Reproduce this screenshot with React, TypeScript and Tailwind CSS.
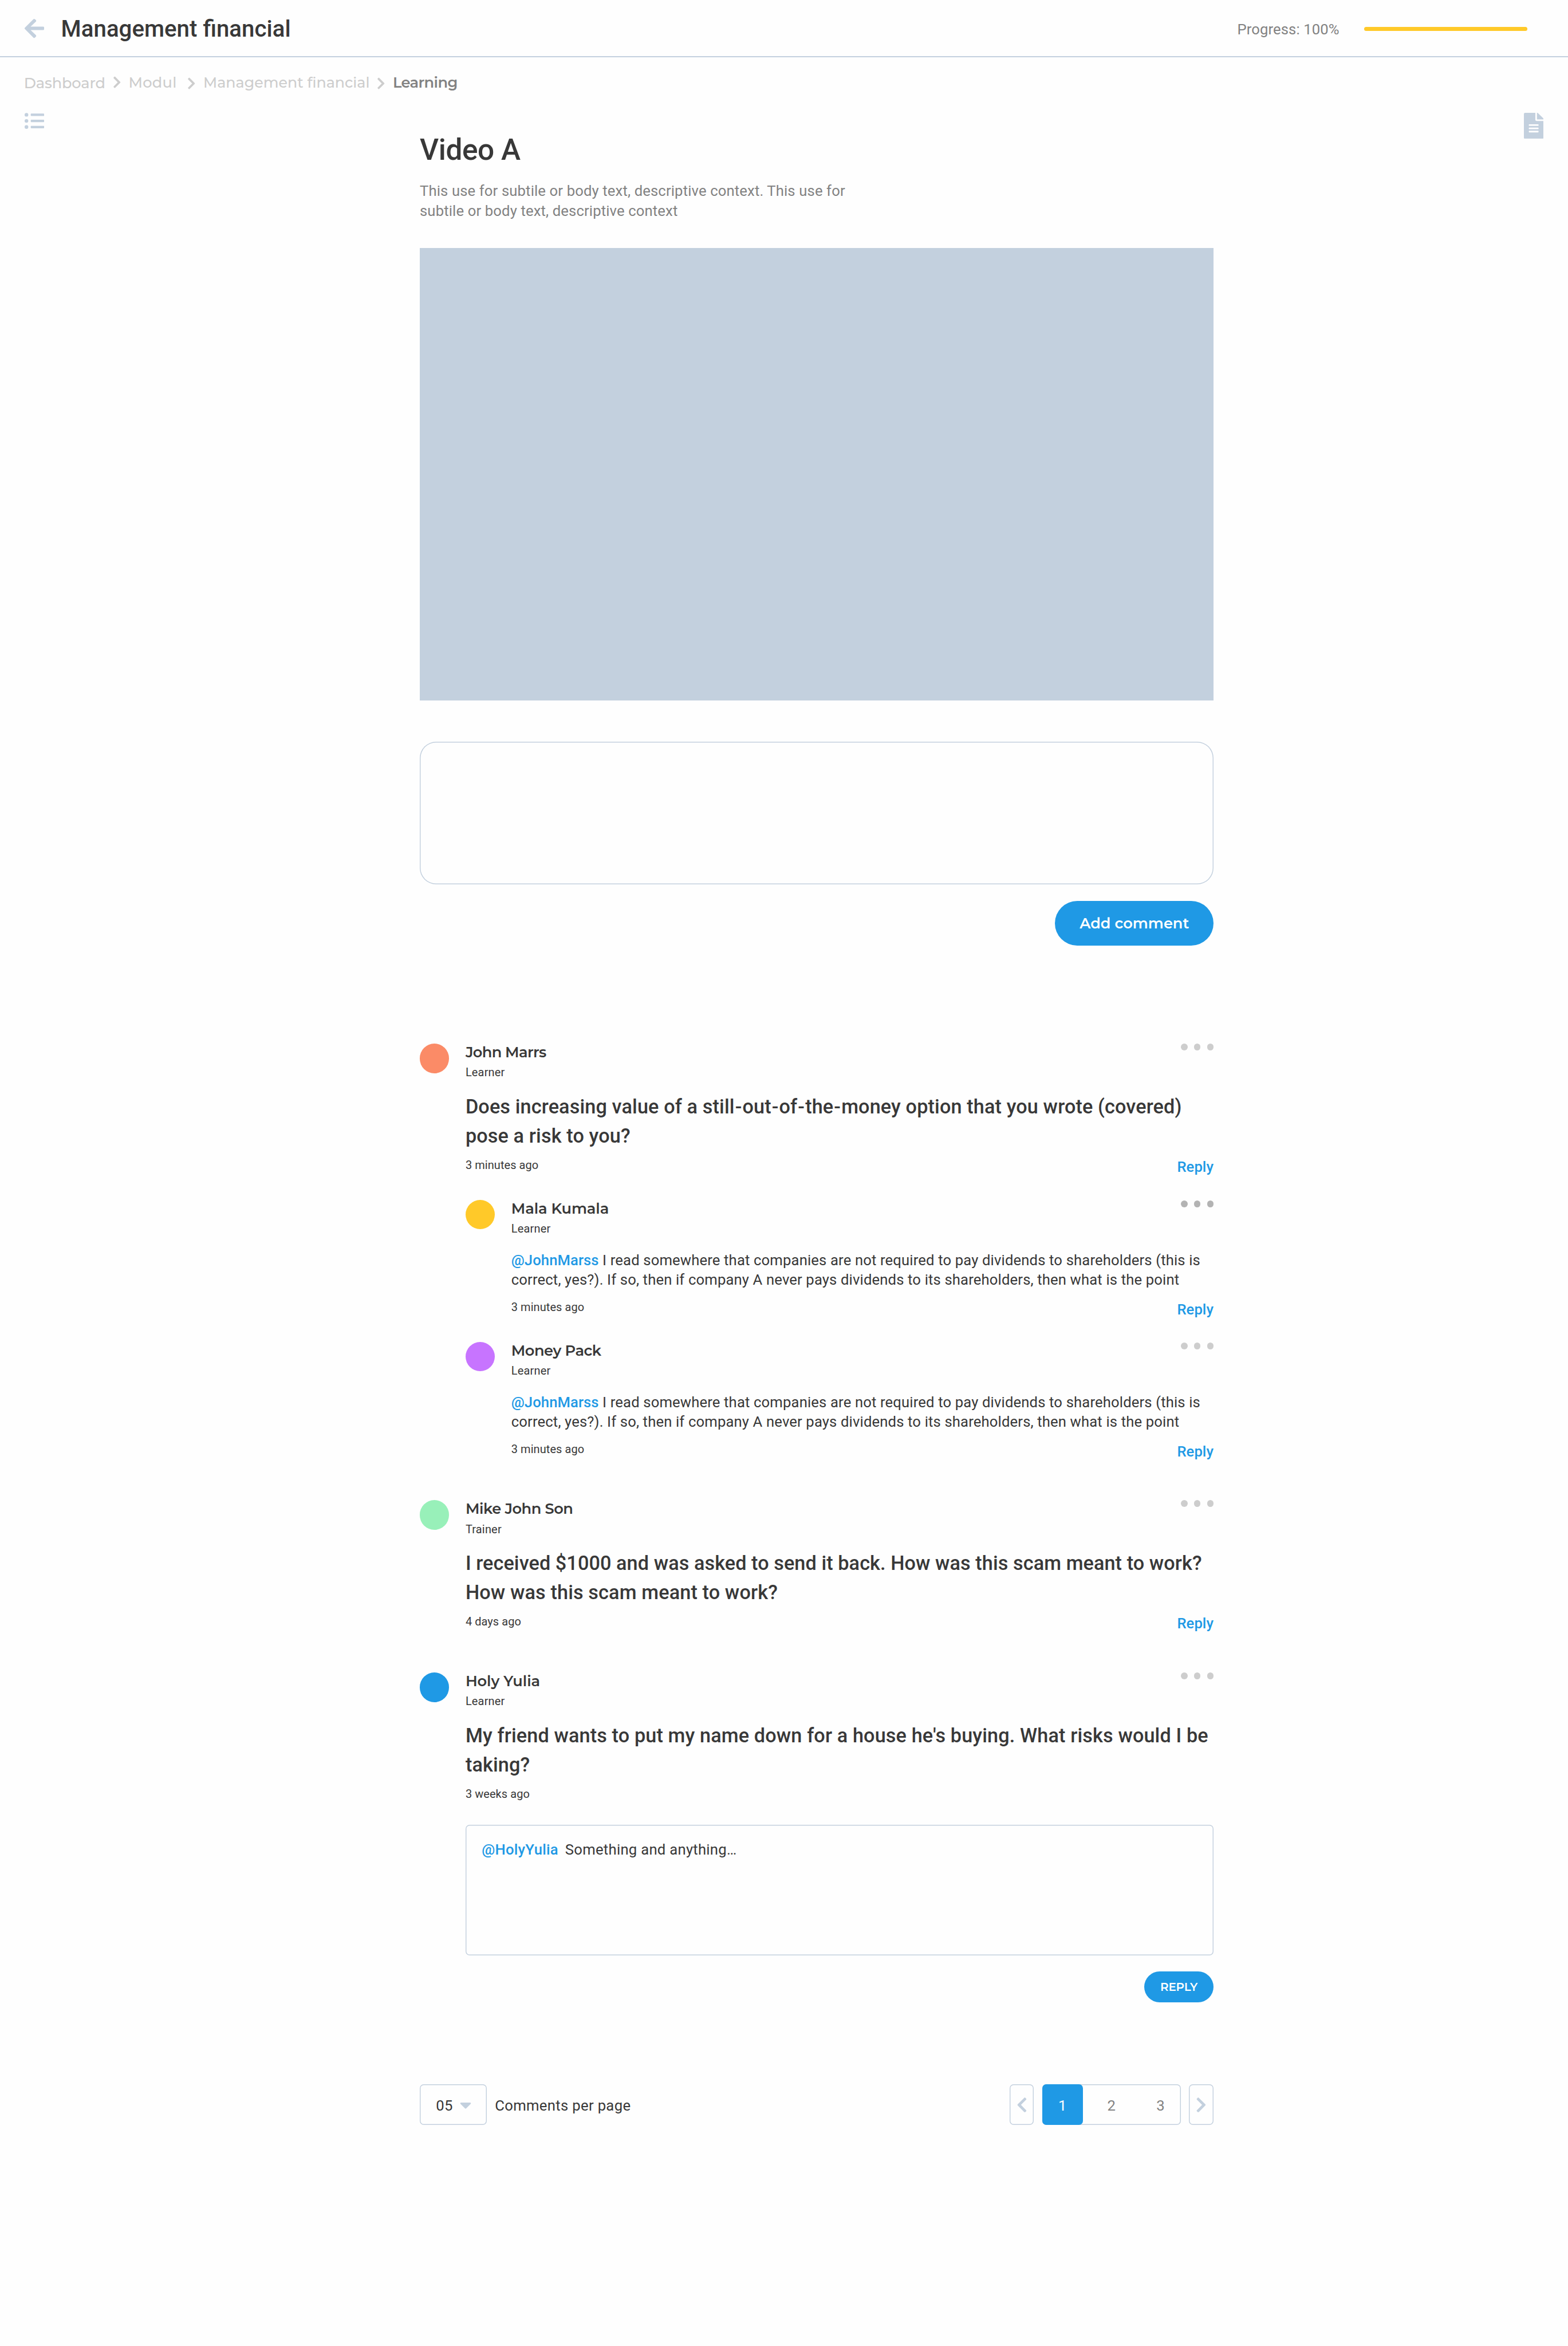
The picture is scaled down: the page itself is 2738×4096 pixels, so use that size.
import React from "react";
import type { ReactNode } from "react";
import {
  FaArrowLeft,
  FaCaretDown,
  FaChevronLeft,
  FaChevronRight,
  FaFileAlt,
  FaListUl,
} from "react-icons/fa";

function Header() {
  return (
    <header className="flex h-[100px] items-center border-b-2 border-[#c3d0de] pt-[3px] pl-[42.8px] pr-[71.3px]">
      <FaArrowLeft className="-mt-[2px] h-[39.1px] w-[34.2px] text-[#c3d0de]" />
      <h1 className="mt-[1px] ml-[29.6px] text-[40.25px] leading-[48px] font-medium text-[#383838]">
        Management financial
      </h1>
      <div className="ml-auto flex items-center gap-[42.9px]">
        <span className="mt-[0.6px] text-[25.67px] leading-[32px] tracking-[0.09px] text-[#828282]">
          Progress: 100%
        </span>
        <div className="h-[7px] w-[285.2px] rounded-full bg-[#ffc929]" />
      </div>
    </header>
  );
}

function Breadcrumb() {
  return (
    <nav className="flex h-[60px] items-start pt-[27.6px] pl-[41.8px] font-[Montserrat,Inter,sans-serif] text-[25.67px] leading-[32px] font-medium text-[#cdcdcd]">
      <span className="mt-[1.4px] tracking-[-0.18px]">Dashboard</span>
      <FaChevronRight className="mt-[4.7px] ml-[13.2px] h-[23.4px] w-[14.6px]" />
      <span className="ml-[13px] tracking-[0.25px]">Modul</span>
      <FaChevronRight className="mt-[6.1px] ml-[18.4px] h-[23.4px] w-[14.6px]" />
      <span className="ml-[13.4px] text-[25.32px]">Management financial</span>
      <FaChevronRight className="mt-[6.1px] ml-[12.3px] h-[23.4px] w-[14.6px]" />
      <span className="ml-[13.5px] font-semibold tracking-[-0.6px] text-[#828282]">
        Learning
      </span>
    </nav>
  );
}

function Dots({ className }: { className: string }) {
  return (
    <div className={`ml-auto flex gap-[11.4px] self-start ${className}`}>
      <i className="size-[11.4px] rounded-full bg-current" />
      <i className="size-[11.4px] rounded-full bg-current" />
      <i className="size-[11.4px] rounded-full bg-current" />
    </div>
  );
}

type CommentProps = {
  name: string;
  nameClass: string;
  role: string;
  avatar: string;
  time: string;
  dots: string;
  className: string;
  reply?: boolean;
  nested?: boolean;
  children: ReactNode;
};

function Comment({
  name,
  nameClass,
  role,
  avatar,
  time,
  dots,
  className,
  reply = true,
  nested = false,
  children,
}: CommentProps) {
  return (
    <article className={`flex gap-[28.5px] text-[#383838] ${className}`}>
      <div className={`size-[51.4px] shrink-0 rounded-full ${avatar}`} />
      <div className="min-w-0 flex-1">
        <div className="flex">
          <div>
            <h3
              className={`font-[Montserrat,Inter,sans-serif] text-[25.67px] leading-[30.1px] font-semibold ${nameClass}`}
            >
              {name}
            </h3>
            <p className="mt-[8px] text-[19.96px] leading-[24px] tracking-[0.2px]">{role}</p>
          </div>
          <Dots className={dots} />
        </div>
        {nested ? (
          <p className="mt-[26px] text-[25.67px] leading-[34.2px] tracking-[0.14px] whitespace-nowrap">
            {children}
          </p>
        ) : (
          <p className="mt-[22.3px] text-[34.22px] leading-[51.34px] font-medium tracking-[0.13px] whitespace-nowrap">
            {children}
          </p>
        )}
        <div
          className={`flex h-[28px] items-start justify-between ${nested ? "mt-[18.9px]" : "mt-[12.1px]"}`}
        >
          <time className="text-[19.96px] leading-[24px] tracking-[0.09px]">{time}</time>
          {reply && (
            <button className="mt-[3.7px] text-[25.67px] leading-[24px] font-medium tracking-[0.05px] text-[#1f99e5]">
              Reply
            </button>
          )}
        </div>
      </div>
    </article>
  );
}

function DividendsBody() {
  return (
    <>
      <span className="font-medium tracking-[0.07px] text-[#1f99e5]">@JohnMarss</span> I read
      somewhere that companies are not required to pay dividends to shareholders (this is
      <br />
      correct, yes?). If so, then if company A never pays dividends to its shareholders, then what
      is the point
    </>
  );
}

function Hyphen() {
  return <span className="px-[1.05px]">-</span>;
}

function ReplyForm() {
  return (
    <div className="mt-[38px] ml-[79.9px] flex flex-col items-end">
      <div className="flex h-[228.2px] w-full rounded-[7px] pt-[26.8px] pl-[28.4px] text-[25.67px] leading-[34px] text-[#383838] shadow-[inset_0_0_0_1.43px_#c3d0de]">
        <span className="font-medium tracking-[0.23px] text-[#1f99e5]">@HolyYulia</span>
        <span className="ml-[12px] tracking-[0.27px]">Something and anything…</span>
      </div>
      <button className="mt-[28.5px] flex h-[54.2px] w-[121.2px] items-center justify-center rounded-full bg-[#1f99e5] font-[Montserrat,Inter,sans-serif] text-[19.96px] leading-[24px] font-semibold tracking-[-0.2px] text-white">
        REPLY
      </button>
    </div>
  );
}

function Pager() {
  return (
    <div className="mt-[142.6px] flex h-[71.3px] items-stretch text-[25.67px] leading-[32px] text-[#383838]">
      <div className="flex w-[117px] items-center rounded-[7px] pl-[28.3px] shadow-[inset_0_0_0_1.43px_#c3d0de]">
        <span className="mt-[2px] tracking-[0.24px]">05</span>
        <FaCaretDown className="ml-[12.3px] h-[32px] w-[20px] text-[#c3d0de]" />
      </div>
      <span className="mt-[2px] ml-[14.2px] self-center tracking-[0.33px]">
        Comments per page
      </span>
      <div className="ml-auto flex gap-[14.3px] text-[#828282]">
        <button className="flex w-[42.8px] items-center justify-center rounded-[7px] text-[#c3d0de] shadow-[inset_0_0_0_1.43px_#c3d0de]">
          <FaChevronLeft className="h-[30.1px] w-[18.8px]" />
        </button>
        <div className="flex w-[242.4px] rounded-[7px] text-center shadow-[inset_0_0_0_1.43px_#c3d0de]">
          <button className="w-[71.3px] rounded-[7px] bg-[#1f99e5] pt-[2px] text-white">1</button>
          <button className="w-[99.8px] pt-[2px]">2</button>
          <button className="w-[71.3px] pt-[2px]">3</button>
        </div>
        <button className="flex w-[42.8px] items-center justify-center rounded-[7px] text-[#c3d0de] shadow-[inset_0_0_0_1.43px_#c3d0de]">
          <FaChevronRight className="h-[30.1px] w-[18.8px]" />
        </button>
      </div>
    </div>
  );
}

export default function App() {
  return (
    <div className="min-h-[4096px] w-[2738px] overflow-hidden bg-[#fefefe] font-[Roboto,sans-serif]">
      <Header />
      <Breadcrumb />
      <div className="flex items-start pl-[42.8px]">
        <FaListUl className="mt-[33.6px] size-[34.2px] shrink-0 text-[#c3d0de]" />
        <main className="ml-[656px] flex w-[1386.1px] shrink-0 flex-col">
          <h2 className="mt-[72px] text-[51.34px] leading-[60px] font-medium tracking-[-0.4px] text-[#383838]">
            Video A
          </h2>
          <p className="mt-[24.4px] text-[25.67px] leading-[34.2px] tracking-[0.13px] text-[#828282]">
            This use for subtile or body text, descriptive context. This use for
            <br />
            subtile or body text, descriptive context
          </p>
          <div className="mt-[48.7px] h-[790px] bg-[#c3d0de]" />
          <div className="mt-[71.3px] h-[249.6px] rounded-[28.5px] shadow-[inset_0_0_0_1.43px_#c3d0de]" />
          <button className="mt-[28.5px] flex h-[78.4px] w-[276.7px] items-center justify-center self-end rounded-full bg-[#1f99e5] font-[Montserrat,Inter,sans-serif] text-[25.67px] leading-[32px] font-semibold text-white">
            Add comment
          </button>

          <section className="mt-[171.1px] flex flex-col">
            <Comment
              name="John Marrs"
              nameClass="tracking-[-0.62px]"
              role="Learner"
              avatar="bg-[#fb8b67]"
              time="3 minutes ago"
              dots="text-[#cdcdcd]"
              className=""
            >
              Does increasing value of a still
              <Hyphen />
              out
              <Hyphen />
              of
              <Hyphen />
              the
              <Hyphen />
              money option that you wrote (covered)
              <br />
              pose a risk to you?
            </Comment>
            <Comment
              nested
              name="Mala Kumala"
              nameClass="tracking-[-0.1px]"
              role="Learner"
              avatar="bg-[#ffc929]"
              time="3 minutes ago"
              dots="mt-[1.4px] text-[#b3b3b3]"
              className="mt-[45.2px] ml-[79.9px]"
            >
              <DividendsBody />
            </Comment>
            <Comment
              nested
              name="Money Pack"
              nameClass="tracking-[-0.45px]"
              role="Learner"
              avatar="bg-[#c774ff]"
              time="3 minutes ago"
              dots="mt-[1.4px] text-[#cdcdcd]"
              className="mt-[44.7px] ml-[79.9px]"
            >
              <DividendsBody />
            </Comment>
            <Comment
              name="Mike John Son"
              nameClass="tracking-[-0.43px]"
              role="Trainer"
              avatar="bg-[#98f0b9]"
              time="4 days ago"
              dots="text-[#cdcdcd]"
              className="mt-[73.3px]"
            >
              <span className="tracking-[0.08px]">
                I received $1000 and was asked to send it back. How was this scam meant to work?
              </span>
              <br />
              How was this scam meant to work?
            </Comment>
            <Comment
              name="Holy Yulia"
              nameClass="tracking-[-0.04px]"
              role="Learner"
              avatar="bg-[#1f99e5]"
              time="3 weeks ago"
              dots="text-[#cdcdcd]"
              className="mt-[73.7px]"
              reply={false}
            >
              My friend wants to put my name down for a house he's buying. What risks would I be
              <br />
              taking?
            </Comment>
            <ReplyForm />
          </section>
          <Pager />
        </main>
        <FaFileAlt className="mt-[36.8px] ml-[541.9px] h-[45.6px] w-[34.2px] shrink-0 text-[#c3d0de]" />
      </div>
    </div>
  );
}
